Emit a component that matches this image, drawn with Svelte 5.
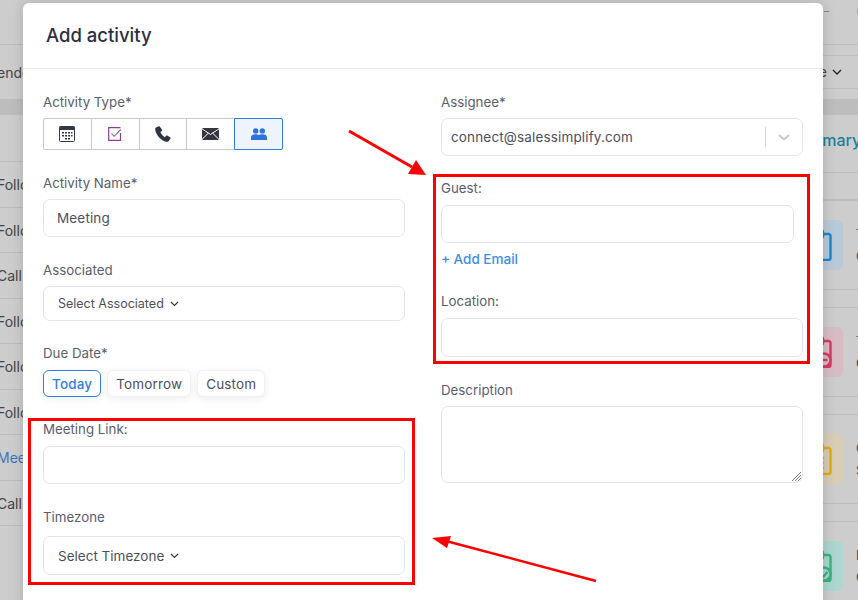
<script>
  const types = ['calendar', 'task', 'phone', 'mail', 'meeting']
  const leftRows = [
    { text: 'Follow' },
    { text: 'Follow' },
    { text: 'Call' },
    { text: 'Follow' },
    { text: 'Follow' },
    { text: 'Follow' },
    { text: 'Meeting', link: true },
    { text: 'Call' }
  ]
  const cards = [
    { tone: 'blue', a: 'To', b: 'Cr' },
    { tone: 'red', a: 'To', b: 'Ov' },
    { tone: 'yellow', a: 'Ca', b: 'Sc' },
    { tone: 'green', a: 'Me', b: 'Co' }
  ]
  const days = ['Today', 'Tomorrow', 'Custom']
</script>

<div class="page">
  <div class="backdrop">
    <div class="topbar"><span class="dash"></span><span class="avatar"></span></div>
    <div class="toolbar">
      <span class="crumb">Attendee</span>
      <div class="filter">Type
        <svg width="10" height="6" viewBox="0 0 10 6"><path d="M1 1l4 4 4-4" fill="none" stroke="#222" stroke-width="1.3"/></svg>
      </div>
    </div>
    <div class="band"></div>
    <div class="lower">
      <div class="rows">
        <div class="rows-head"></div>
        {#each leftRows as row}
          <div class="row" class:link={row.link}>{row.text}</div>
        {/each}
      </div>
      <div class="summary">
        <div class="summary-title">Summary</div>
        <div class="summary-gap"></div>
        {#each cards as card}
          <div class="card">
            <div class="card-icon {card.tone}">
              <svg width="28" height="32" viewBox="0 0 28 32" fill="none" stroke="currentColor" stroke-width="2.4">
                <path d="M9 5H3.500A2 2 0 0 0 1.500 7v22a2 2 0 0 0 2 2h21a2 2 0 0 0 2-2V7a2 2 0 0 0-2-2H19"/>
                <rect x="9" y="1.500" width="10" height="7" rx="1.500"/>
                {#if card.tone === 'red'}
                  <circle cx="20" cy="24" r="6.500" fill="#d8bcc3"/>
                  <path d="M16.500 24h7"/>
                {:else if card.tone === 'yellow'}
                  <path d="M8 15h12M8 20h12M8 25h12"/>
                {:else if card.tone === 'green'}
                  <circle cx="20" cy="24" r="6.500" fill="#acd6cf"/>
                  <path d="M17 24l2.500 2.500L23.500 22"/>
                {/if}
              </svg>
            </div>
            <div class="card-text"><span>{card.a}</span><span>{card.b}</span></div>
          </div>
        {/each}
      </div>
    </div>
  </div>

  <div class="modal">
    <header><h2>Add activity</h2></header>
    <div class="form">
      <div class="col">
        <div class="label first">Activity Type*</div>
        <div class="types">
          {#each types as t}
            <button type="button" class:active={t === 'meeting'}>
              {#if t === 'calendar'}
                <svg width="16" height="16" viewBox="0 0 16 16">
                  <rect x="0.5" y="0.5" width="15" height="15" rx="1" fill="#fff" stroke="#33384a"/>
                  <rect x="0.5" y="0.5" width="15" height="3.5" fill="#33384a"/>
                  <path d="M3 6h2v1.6H3zM6 6h2v1.6H6zM9 6h2v1.6H9zM12 6h1.5v1.6H12zM3 9h2v1.6H3zM6 9h2v1.6H6zM9 9h2v1.6H9zM12 9h1.5v1.6H12zM6 12h2v1.6H6zM9 12h2v1.6H9z" fill="#33384a"/>
                </svg>
              {:else if t === 'task'}
                <svg width="14" height="14" viewBox="0 0 14 14" fill="none">
                  <path d="M12.5 6v7.3H.7V.7h11.8" stroke="#8a3f92" stroke-width="1.2"/>
                  <path d="M3.5 6.5l2.6 2.8L12.8 2.5" stroke="#6f7380" stroke-width="1.1"/>
                </svg>
              {:else if t === 'phone'}
                <svg width="16" height="16" viewBox="0 0 16 16">
                  <path d="M3.6.3L1 1.6C.1 2.100 0 3.300.4 4.700c1.500 5.100 5.800 9.700 10.400 11 1.300.3 2.500 0 3-.8l1.700-2.300c.2-.4.100-.8-.2-1l-3-2c-.4-.2-.8-.2-1.100.1l-1.300 1.500c-1.800-.9-3.700-3.200-4.500-5.100l1.500-1.200c.3-.3.4-.7.200-1.100L4.700.6C4.500.2 4 .1 3.600.3z" fill="#2f3342"/>
                </svg>
              {:else if t === 'mail'}
                <svg width="17" height="12" viewBox="0 0 17 12">
                  <rect width="17" height="12" rx="1" fill="#33363f"/>
                  <path d="M0 .8l8.500 5.700L17 .8M0 11.400l6.400-6.300M17 11.400l-6.400-6.300" fill="none" stroke="#fff" stroke-width="1"/>
                </svg>
              {:else}
                <svg width="16" height="12" viewBox="0 0 16 12" fill="#2f72dc">
                  <circle cx="4.700" cy="2.900" r="2.700"/>
                  <circle cx="11.300" cy="2.900" r="2.700"/>
                  <path d="M0 12V9.300C0 7.400 1.700 6.200 4.700 6.200c1.300 0 2.400.3 3.100.8.800-.5 2-.8 3.400-.8 3 0 4.800 1.200 4.800 3.100V12H0z"/>
                </svg>
              {/if}
            </button>
          {/each}
        </div>

        <div class="label name">Activity Name*</div>
        <div class="input tall">Meeting</div>

        <div class="label assoc">Associated</div>
        <div class="input select small">Select Associated
          <svg width="9" height="6" viewBox="0 0 9 6"><path d="M1 1l3.500 3.500L8 1" fill="none" stroke="#333" stroke-width="1.100"/></svg>
        </div>

        <div class="label due">Due Date*</div>
        <div class="days">
          {#each days as d}
            <button type="button" class:active={d === 'Today'}>{d}</button>
          {/each}
        </div>

        <div class="label link-label">Meeting Link:</div>
        <div class="input tall"></div>

        <div class="label zone">Timezone</div>
        <div class="input select zone-select">Select Timezone
          <svg width="9" height="6" viewBox="0 0 9 6"><path d="M1 1l3.500 3.500L8 1" fill="none" stroke="#333" stroke-width="1.100"/></svg>
        </div>
      </div>

      <div class="col">
        <div class="label first">Assignee*</div>
        <div class="input assignee">
          <span>connect@salessimplify.com</span>
          <i class="sep"></i>
          <svg width="12" height="7" viewBox="0 0 12 7"><path d="M1 1l5 4.500L11 1" fill="none" stroke="#c8c8c8" stroke-width="2"/></svg>
        </div>

        <div class="label guest">Guest:</div>
        <div class="input tall narrow"></div>
        <div class="add-email">+ Add Email</div>

        <div class="label location">Location:</div>
        <div class="input loc-input"></div>

        <div class="label desc">Description</div>
        <div class="input area">
          <svg class="grip" width="9" height="9" viewBox="0 0 9 9"><path d="M0 9l9-9M3 9l6-6M6 9l3-3" stroke="#555" stroke-width="0.800"/></svg>
        </div>
      </div>
    </div>
  </div>

  <svg class="marks" width="858" height="600" viewBox="0 0 858 600" fill="none">
    <rect x="29.500" y="419.500" width="384" height="164" stroke="#f00" stroke-width="3"/>
    <rect x="434.500" y="175.500" width="374" height="187" stroke="#f00" stroke-width="3"/>
    <path d="M349 131L412 167" stroke="#f00" stroke-width="3"/>
    <path d="M426 175L408 174L416 160Z" fill="#f00"/>
    <path d="M596 581L446 541" stroke="#f00" stroke-width="2.500"/>
    <path d="M432 538L451 536L447 548Z" fill="#f00"/>
  </svg>
</div>

<style>
  :global(body) {
    margin: 0;
    font-family: Inter, "Noto Sans", sans-serif;
  }

  .page {
    position: relative;
    width: 858px;
    height: 600px;
    overflow: hidden;
    background: #cdcdcd;
  }

  .backdrop {
    position: absolute;
    inset: 0;
    color: #444;
    font-size: 14px;
  }

  .topbar {
    height: 45px;
    border-bottom: 1px solid #bcbcbc;
    display: flex;
    align-items: center;
    justify-content: flex-end;
    gap: 28px;
    box-sizing: border-box;
    padding-bottom: 22px;
  }

  .dash {
    width: 5px;
    height: 1px;
    background: #888;
  }

  .avatar {
    width: 14px;
    height: 14px;
    margin-right: -13px;
    border-radius: 50%;
    background: #a89b8e;
  }

  .toolbar {
    height: 54px;
    display: flex;
    align-items: center;
    justify-content: space-between;
    box-sizing: border-box;
  }

  .crumb {
    width: 23px;
    overflow: hidden;
    white-space: nowrap;
    text-indent: -21px;
  }

  .filter {
    width: 70px;
    height: 34px;
    box-sizing: border-box;
    border: 1px solid #bdbdbd;
    border-right: 0;
    border-radius: 6px 0 0 6px;
    display: flex;
    align-items: center;
    justify-content: flex-end;
    gap: 5px;
    padding-right: 16px;
    margin-top: -1px;
  }

  .band {
    height: 16px;
    background: #bdbdbd;
  }

  .lower {
    display: flex;
    justify-content: space-between;
  }

  .rows {
    width: 23px;
    overflow: hidden;
  }

  .rows-head {
    height: 47px;
    border-bottom: 1px solid #bcbcbc;
    box-sizing: border-box;
  }

  .row {
    height: 45.500px;
    line-height: 45px;
    box-sizing: border-box;
    border-bottom: 1px solid #bcbcbc;
    white-space: nowrap;
    text-indent: -3px;
  }

  .row.link {
    color: #3c72c4;
  }

  .summary {
    width: 98px;
    overflow: hidden;
  }

  .summary-title {
    height: 58px;
    line-height: 50px;
    margin-left: 28px;
    color: #1a7f9c;
    font-size: 16px;
    font-weight: 500;
    white-space: nowrap;
    border-bottom: 1px solid #bcbcbc;
    box-sizing: border-box;
  }

  .summary-gap {
    height: 27px;
    border-bottom: 1px solid #bcbcbc;
    box-sizing: border-box;
  }

  .card {
    height: 90px;
    margin-bottom: 17px;
    box-sizing: border-box;
    border-top: 1px solid #bcbcbc;
    border-bottom: 1px solid #bcbcbc;
    display: flex;
    align-items: center;
    gap: 13px;
    padding-left: 33px;
  }

  .card:first-of-type {
    border-top: 0;
  }

  .card-icon {
    flex: none;
    width: 50px;
    height: 50px;
    border-radius: 6px;
    display: flex;
    align-items: center;
    justify-content: center;
  }

  .card-icon.blue { background: #b8c9d8; color: #1b86d4; }
  .card-icon.red { background: #d8bcc3; color: #d63a63; }
  .card-icon.yellow { background: #d8cdb5; color: #e2aa0c; }
  .card-icon.green { background: #acd6cf; color: #35b37e; }

  .card-text {
    display: flex;
    flex-direction: column;
    gap: 6px;
    white-space: nowrap;
    font-size: 13px;
  }

  .modal {
    position: relative;
    width: 800px;
    height: 640px;
    margin-left: 23px;
    top: 3px;
    background: #fff;
    border-radius: 6px;
    box-shadow: 0 0 14px rgba(0, 0, 0, 0.16);
    color: #4c4f60;
  }

  header {
    height: 66px;
    box-sizing: border-box;
    border-bottom: 1px solid #e9e9f1;
    padding: 20px 23px 0;
  }

  h2 {
    margin: 0;
    font-size: 18.500px;
    line-height: 24px;
    font-weight: 500;
    color: #2b2f42;
  }

  .form {
    display: grid;
    grid-template-columns: 362px 362px;
    column-gap: 36px;
    padding: 0 20px;
  }

  .label {
    font-size: 13.300px;
    line-height: 20px;
    color: #5a5d6e;
    white-space: nowrap;
  }

  .first { margin-top: 23px; margin-bottom: 6px; }

  .types {
    display: flex;
    width: 240px;
    height: 32px;
  }

  .types button {
    flex: 1;
    padding: 0;
    margin: 0;
    background: #fff;
    border: 1px solid #c9c9c9;
    border-left-width: 0;
    display: flex;
    align-items: center;
    justify-content: center;
    border-radius: 0;
  }

  .types button:first-child {
    border-left-width: 1px;
    border-radius: 2px 0 0 2px;
  }

  .types button.active {
    background: #edf4fe;
    border: 1px solid #2f7de1;
    border-radius: 0 2px 2px 0;
    margin-left: -1px;
  }

  .input {
    box-sizing: border-box;
    border: 1px solid #e4e4f0;
    border-radius: 7px;
    font-size: 13.500px;
    letter-spacing: 0.15px;
    color: #4c4f60;
    background: #fff;
  }

  .tall {
    height: 38px;
    display: flex;
    align-items: center;
    padding-left: 13px;
  }

  .name { margin-top: 23px; margin-bottom: 6px; }
  .assoc { margin-top: 23px; margin-bottom: 6px; }
  .due { margin-top: 22px; margin-bottom: 7px; }
  .link-label { margin-top: 22px; margin-bottom: 7px; }
  .zone { margin-top: 23px; margin-bottom: 9px; }

  .select {
    display: flex;
    align-items: center;
    gap: 6px;
    padding-left: 14px;
  }

  .small {
    height: 35px;
    font-size: 12.500px;
    letter-spacing: 0;
  }

  .zone-select {
    height: 39px;
    font-size: 13.500px;
    letter-spacing: 0;
  }

  .days {
    display: flex;
    gap: 6px;
    height: 27px;
  }

  .days button {
    height: 27px;
    padding: 0 8px;
    background: #fff;
    border: 1px solid #f0f0f5;
    border-radius: 6px;
    font: inherit;
    font-size: 13.500px;
    letter-spacing: 0.15px;
    color: #4c4f60;
    box-shadow: 0 2px 8px rgba(0, 0, 0, 0.07);
  }

  .days button.active {
    border-color: #2f7de1;
    color: #2f7de1;
    font-weight: 500;
  }

  .assignee {
    height: 38px;
    display: flex;
    align-items: center;
    padding: 0 12px 0 9px;
  }

  .assignee span {
    flex: 1;
  }

  .sep {
    width: 1px;
    height: 20px;
    background: #d4d4d4;
    margin-right: 12px;
  }

  .guest { margin-top: 22px; margin-bottom: 7px; }

  .narrow { width: 353px; }

  .add-email {
    margin-top: 7px;
    font-size: 13.500px;
    line-height: 18px;
    font-weight: 500;
    color: #3d8fe6;
  }

  .location { margin-top: 23px; margin-bottom: 7px; }

  .loc-input { height: 39px; }

  .desc { margin-top: 23px; margin-bottom: 6px; }

  .area {
    position: relative;
    height: 77px;
  }

  .grip {
    position: absolute;
    right: 1px;
    bottom: 1px;
  }

  .marks {
    position: absolute;
    left: 0;
    top: 0;
    pointer-events: none;
  }
</style>
